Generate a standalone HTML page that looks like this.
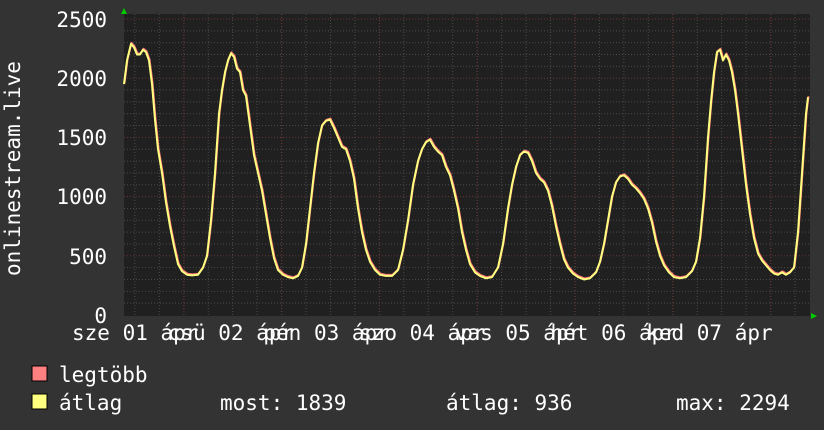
<!DOCTYPE html>
<html><head><meta charset="utf-8"><style>
html,body{margin:0;padding:0;background:#333;}
svg{display:block}
text{font-family:"DejaVu Sans Mono","Liberation Mono",monospace;fill:#fff;font-size:21px}
</style></head><body>
<svg id="s" width="824" height="430" xmlns="http://www.w3.org/2000/svg">
<rect x="0" y="0" width="824" height="430" fill="#333"/>
<rect x="124" y="14" width="686" height="302" fill="#202020"/>
<g id="grid"></g>
<polyline id="mx" fill="none" stroke="#ff7878" stroke-width="2" stroke-linejoin="round"/>
<polyline id="av" fill="none" stroke="#ffff80" stroke-width="2" stroke-linejoin="round"/>
<polygon points="121,14 127,14 124,8" fill="#0c0"/>
<polygon points="811,313 811,319 817,316" fill="#0c0"/>
<text x="107" y="27" text-anchor="end">2500</text>
<text x="107" y="86" text-anchor="end">2000</text>
<text x="107" y="145" text-anchor="end">1500</text>
<text x="107" y="204" text-anchor="end">1000</text>
<text x="107" y="264" text-anchor="end">500</text>
<text x="107" y="323" text-anchor="end">0</text>
<text transform="translate(20,276) rotate(-90)">onlinestream.live</text>
<g id="xl"></g>
<rect x="32" y="366" width="15" height="15" fill="#ff8080" stroke="#000" stroke-width="1"/>
<rect x="32" y="394" width="15" height="15" fill="#ffff80" stroke="#000" stroke-width="1"/>
<text x="59" y="382">legtöbb</text>
<text x="59" y="410">átlag</text>
<text x="220" y="410">most: 1839</text>
<text x="446" y="410">átlag: 936</text>
<text x="676" y="410">max: 2294</text>
</svg>
<script>
var ns="http://www.w3.org/2000/svg",g=document.getElementById('grid');
function ln(x1,y1,x2,y2,c){var l=document.createElementNS(ns,'line');l.setAttribute('x1',x1);l.setAttribute('y1',y1);l.setAttribute('x2',x2);l.setAttribute('y2',y2);l.setAttribute('stroke',c);l.setAttribute('stroke-dasharray','1,2');g.appendChild(l);}
function Y(v){return 315-v*0.1184;}
for(var v=100;v<=2500;v+=100){ln(124,Y(v),810,Y(v),v%500==0?'#6a3434':'#4a4a4a');}
for(var x=184-98-49+24.5;x<810;x+=24.45){ if(x>124) ln(x,14,x,316,'#4a4a4a');}
for(var k=0;k<7;k++){ln(184+97.8*k,14,184+97.8*k,316,'#6a3434');}
var d=[124,1950,127,2150,131,2290,134,2260,137,2200,140,2200,143,2240,146,2220,149,2150,152,1950,155,1650,158,1400,162,1200,166,950,170,750,174,580,178,430,182,370,187,340,192,335,198,340,203,400,207,500,211,800,215,1200,219,1700,222,1900,225,2050,228,2150,231,2210,234,2180,237,2080,240,2050,243,1900,246,1850,250,1600,254,1350,258,1200,262,1050,266,850,270,650,274,480,278,380,283,340,288,320,293,310,298,330,302,400,306,600,310,900,314,1200,318,1450,322,1600,326,1640,330,1650,334,1580,338,1500,342,1420,346,1400,350,1300,354,1150,358,900,362,700,366,550,370,450,375,380,380,340,386,330,392,330,398,380,403,550,408,800,413,1100,418,1300,422,1400,426,1460,430,1480,434,1420,438,1380,442,1350,446,1250,450,1180,454,1050,458,900,462,700,466,550,470,430,475,360,480,330,486,310,492,320,498,400,503,600,508,900,512,1100,516,1250,520,1350,524,1380,528,1370,532,1300,536,1200,540,1150,544,1120,548,1050,552,920,556,750,560,600,564,470,568,400,573,350,578,320,584,300,590,310,596,360,600,450,604,600,608,800,612,1000,616,1120,620,1170,624,1180,628,1150,632,1100,636,1070,640,1030,644,980,648,900,652,780,656,620,660,500,664,420,669,360,674,320,680,310,686,320,692,370,696,450,700,650,704,1000,708,1500,711,1800,714,2050,717,2220,720,2240,723,2150,726,2200,729,2150,732,2050,735,1900,738,1700,742,1400,746,1100,750,850,754,650,758,520,762,460,766,420,770,380,774,350,778,340,782,360,786,340,790,360,794,400,798,700,802,1200,806,1700,808,1839];
var p1=[],p2=[];for(var i=0;i<d.length;i+=2){p1.push((d[i]+0.5)+','+(Y(d[i+1])-1));p2.push(d[i]+','+Y(d[i+1]));}
document.getElementById('mx').setAttribute('points',p1.join(' '));
document.getElementById('av').setAttribute('points',p2.join(' '));
var days=['sze','csü','pén','szo','vas','hét','ked'],xl=document.getElementById('xl');
for(var k=0;k<7;k++){var t=document.createElementNS(ns,'text');t.setAttribute('x',123+95.7*k-51);t.setAttribute('y',340);t.textContent=days[k]+' 0'+(k+1)+' ápr';xl.appendChild(t);}
</script>
</body></html>
